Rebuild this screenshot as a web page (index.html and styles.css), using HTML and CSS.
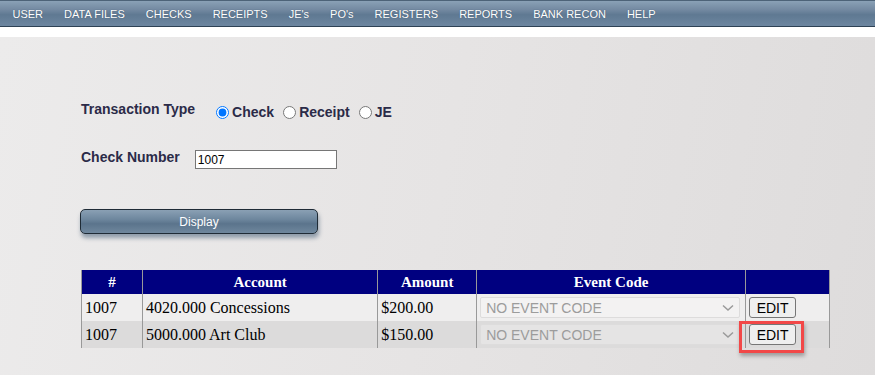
FILE: index.html
```html
<!DOCTYPE html>
<html lang="en">
<head>
  <meta charset="UTF-8">
  <title>Check Event Codes</title>
  <link rel="stylesheet" href="styles.css">
</head>
<body>
  <div class="menu-bar">
    <a href="#">USER</a>
    <a href="#">DATA FILES</a>
    <a href="#">CHECKS</a>
    <a href="#">RECEIPTS</a>
    <a href="#">JE's</a>
    <a href="#">PO's</a>
    <a href="#">REGISTERS</a>
    <a href="#">REPORTS</a>
    <a href="#">BANK RECON</a>
    <a href="#">HELP</a>
  </div>

  <div class="content">
    <div class="form-row type-row">
      <span class="label">Transaction Type</span>
      <label class="radio"><input type="radio" name="ttype" checked> Check</label>
      <label class="radio"><input type="radio" name="ttype"> Receipt</label>
      <label class="radio"><input type="radio" name="ttype"> JE</label>
    </div>

    <div class="form-row number-row">
      <span class="label">Check Number</span>
      <input type="text" class="num-input" value="1007">
    </div>

    <button class="display-btn">Display</button>

    <table class="lines">
      <thead>
        <tr>
          <th class="c-num">#</th>
          <th class="c-acct">Account</th>
          <th class="c-amt">Amount</th>
          <th class="c-event">Event Code</th>
          <th class="c-edit"></th>
        </tr>
      </thead>
      <tbody>
        <tr>
          <td>1007</td>
          <td>4020.000 Concessions</td>
          <td>$200.00</td>
          <td>
            <div class="event-select">NO EVENT CODE
              <svg width="12" height="8" viewBox="0 0 12 8"><path d="M1 1.5 L6 6 L11 1.5" fill="none" stroke="#9a9a9a" stroke-width="1.5"/></svg>
            </div>
          </td>
          <td><button class="edit-btn">EDIT</button></td>
        </tr>
        <tr>
          <td>1007</td>
          <td>5000.000 Art Club</td>
          <td>$150.00</td>
          <td>
            <div class="event-select">NO EVENT CODE
              <svg width="12" height="8" viewBox="0 0 12 8"><path d="M1 1.5 L6 6 L11 1.5" fill="none" stroke="#9a9a9a" stroke-width="1.5"/></svg>
            </div>
          </td>
          <td><span class="marked"><button class="edit-btn">EDIT</button><span class="highlight"></span></span></td>
        </tr>
      </tbody>
    </table>
  </div>
</body>
</html>
```

FILE: styles.css
```css
html, body {
  margin: 0;
  height: 100%;
}
body {
  font-family: "Liberation Sans", Arial, sans-serif;
  background-color: white;
  overflow: hidden;
}
.menu-bar {
  height: 25px;
  display: flex;
  align-items: center;
  padding-left: 2px;
  background: linear-gradient(#8aa1b6 0%, #7389a1 35%, #5f7992 55%, #6d86a0 100%);
  border-top: 1px solid #4d6378;
  border-bottom: 1px solid #2e4255;
  margin-bottom: 10px;
}
.menu-bar a {
  color: white;
  text-decoration: none;
  font-size: 11px;
  padding: 0 10.5px;
  text-shadow: 0 0 1px #3c5268;
}
.content {
  box-sizing: border-box;
  height: 338px;
  padding: 64px 0 0 81px;
  background: linear-gradient(100deg, #ecebeb 0%, #e6e4e4 50%, #dedcdc 100%);
}
.form-row {
  display: flex;
  align-items: center;
}
.label {
  font-size: 14px;
  font-weight: bold;
  color: #2b2b48;
}
.type-row .label {
  margin-right: 21px;
}
.radio {
  display: flex;
  align-items: center;
  font-size: 14px;
  font-weight: bold;
  color: #2b2b48;
  margin-right: 9px;
  position: relative;
  top: 3px;
}
.radio input {
  margin: 0 3px 0 0;
  width: 13px;
  height: 13px;
}
.number-row {
  margin-top: 33px;
}
.number-row .label {
  margin-right: 15px;
  position: relative;
  top: -3px;
}
.num-input {
  width: 136px;
  height: 13px;
  padding: 2px 2px;
  border: 1px solid #767676;
  font-size: 12px;
  font-family: "Liberation Sans", Arial, sans-serif;
  color: #000;
}
.display-btn {
  display: block;
  margin-top: 40px;
  margin-left: -1px;
  width: 238px;
  height: 25px;
  border: 1px solid #1f2b36;
  border-radius: 5px;
  background: linear-gradient(#8aa0b4 0%, #6e879e 40%, #5b748c 60%, #6f879d 100%);
  color: white;
  font-size: 12px;
  font-family: "Liberation Sans", Arial, sans-serif;
  box-shadow: 1px 4px 4px rgba(70, 95, 120, 0.55);
}
.lines {
  margin-top: 36px;
  border-collapse: collapse;
  width: 749px;
  font-family: "Liberation Serif", "Times New Roman", serif;
  border-left: 1px solid #999;
}
.lines th {
  background-color: #000080;
  color: white;
  font-size: 15px;
  font-weight: bold;
  height: 24px;
  padding: 0;
  border-right: 1px solid #999;
}
.lines td {
  font-size: 16px;
  height: 27px;
  padding: 0 0 0 3px;
  border-right: 1px solid #999;
  color: #000;
}
.lines tbody tr:nth-child(1) td {
  background-color: #efeeee;
}
.lines tbody tr:nth-child(2) td {
  background-color: #dcdbdb;
}
.c-num { width: 60px; }
.c-acct { width: 235px; }
.c-amt { width: 98px; }
.c-event { width: 268px; }
.c-edit { width: 83px; }
.event-select {
  width: 260px;
  height: 21px;
  box-sizing: border-box;
  border: 1px solid #dddcdc;
  border-radius: 2px;
  background-color: rgba(255, 255, 255, 0.25);
  color: #9c9c9c;
  font-family: "Liberation Sans", Arial, sans-serif;
  font-size: 14px;
  display: flex;
  align-items: center;
  justify-content: space-between;
  padding: 0 5px 0 5px;
}
.edit-btn {
  width: 47px;
  height: 21px;
  border: 1px solid #767676;
  border-radius: 3px;
  background-color: #efefef;
  font-family: "Liberation Sans", Arial, sans-serif;
  font-size: 14px;
  color: #000;
  padding: 0;
}
.marked {
  position: relative;
  display: inline-block;
}
.highlight {
  position: absolute;
  left: -10px;
  top: -3px;
  width: 59px;
  height: 26px;
  border: 3px solid #f24848;
  box-shadow: 1px 3px 4px rgba(0, 0, 0, 0.3);
}
```
